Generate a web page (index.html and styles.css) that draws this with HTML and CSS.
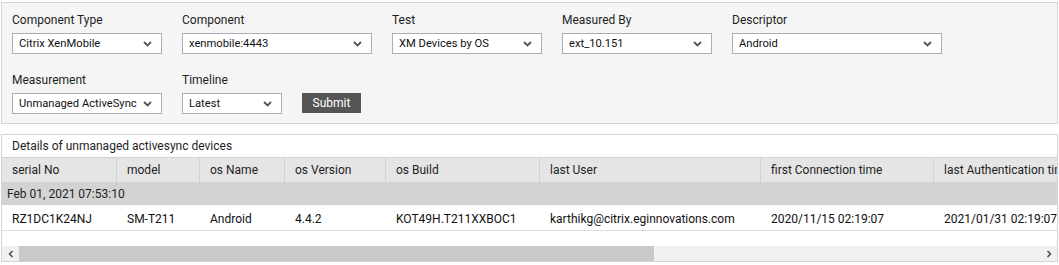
FILE: index.html
```html
<!DOCTYPE html>
<html lang="en">
<head>
    <meta charset="UTF-8" />
    <title>Details of unmanaged activesync devices</title>
    <link rel="stylesheet" href="styles.css">
</head>
<body>
    <div class="page">
        <form class="filters">
            <div class="filter-row">
                <div class="field">
                    <label>Component Type</label>
                    <div class="select w150">Citrix XenMobile<svg class="chev" width="9" height="6" viewBox="0 0 9 6"><path d="M1 1 L4.5 4.5 L8 1" /></svg></div>
                </div>
                <div class="field">
                    <label>Component</label>
                    <div class="select w190">xenmobile:4443<svg class="chev" width="9" height="6" viewBox="0 0 9 6"><path d="M1 1 L4.5 4.5 L8 1" /></svg></div>
                </div>
                <div class="field">
                    <label>Test</label>
                    <div class="select w150">XM Devices by OS<svg class="chev" width="9" height="6" viewBox="0 0 9 6"><path d="M1 1 L4.5 4.5 L8 1" /></svg></div>
                </div>
                <div class="field">
                    <label>Measured By</label>
                    <div class="select w150">ext_10.151<svg class="chev" width="9" height="6" viewBox="0 0 9 6"><path d="M1 1 L4.5 4.5 L8 1" /></svg></div>
                </div>
                <div class="field">
                    <label>Descriptor</label>
                    <div class="select w210">Android<svg class="chev" width="9" height="6" viewBox="0 0 9 6"><path d="M1 1 L4.5 4.5 L8 1" /></svg></div>
                </div>
            </div>
            <div class="filter-row">
                <div class="field">
                    <label>Measurement</label>
                    <div class="select w150">Unmanaged ActiveSync<svg class="chev" width="9" height="6" viewBox="0 0 9 6"><path d="M1 1 L4.5 4.5 L8 1" /></svg></div>
                </div>
                <div class="field">
                    <label>Timeline</label>
                    <div class="select w100">Latest<svg class="chev" width="9" height="6" viewBox="0 0 9 6"><path d="M1 1 L4.5 4.5 L8 1" /></svg></div>
                </div>
                <button type="button" class="submit">Submit</button>
            </div>
        </form>

        <section class="results">
            <div class="results-title">Details of unmanaged activesync devices</div>
            <div class="table-wrap">
                <table class="grid">
                    <colgroup>
                        <col style="width: 114px">
                        <col style="width: 83px">
                        <col style="width: 85px">
                        <col style="width: 101px">
                        <col style="width: 154px">
                        <col style="width: 221px">
                        <col style="width: 173px">
                        <col style="width: 200px">
                    </colgroup>
                    <thead>
                        <tr>
                            <th>serial No</th>
                            <th>model</th>
                            <th>os Name</th>
                            <th>os Version</th>
                            <th>os Build</th>
                            <th>last User</th>
                            <th>first Connection time</th>
                            <th>last Authentication time</th>
                        </tr>
                    </thead>
                    <tbody>
                        <tr class="group-row">
                            <td colspan="8">Feb 01, 2021 07:53:10</td>
                        </tr>
                        <tr class="data-row">
                            <td>RZ1DC1K24NJ</td>
                            <td>SM-T211</td>
                            <td>Android</td>
                            <td>4.4.2</td>
                            <td>KOT49H.T211XXBOC1</td>
                            <td>karthikg@citrix.eginnovations.com</td>
                            <td>2020/11/15 02:19:07</td>
                            <td>2021/01/31 02:19:07</td>
                        </tr>
                    </tbody>
                </table>
            </div>
            <div class="hscroll">
                <span class="scroll-btn"><svg width="6" height="8" viewBox="0 0 6 8"><path d="M4.5 1 L1.5 4 L4.5 7" /></svg></span>
                <div class="scroll-track">
                    <div class="scroll-thumb"></div>
                </div>
                <span class="scroll-btn"><svg width="6" height="8" viewBox="0 0 6 8"><path d="M1.5 1 L4.5 4 L1.5 7" /></svg></span>
            </div>
        </section>
    </div>
</body>
</html>
```

FILE: styles.css
```css
* {
    margin: 0;
    padding: 0;
    box-sizing: border-box;
}

body {
    font-family: Roboto, 'Liberation Sans', sans-serif;
    font-size: 12px;
    color: #222222;
    background: #ffffff;
}

.page {
    width: 1059px;
    padding: 2px 1px 0 1px;
}

/* filter panel */
.filters {
    width: 1057px;
    background: #f5f5f5;
    border: 1px solid #d4d4d4;
    padding: 8px 10px 9px;
}

.filter-row {
    display: flex;
    align-items: flex-end;
    gap: 20px;
}

.filter-row + .filter-row {
    margin-top: 17px;
}

.field label {
    display: block;
    height: 18px;
    line-height: 18px;
    margin-bottom: 4px;
    color: #1e1e1e;
}

.select {
    display: flex;
    align-items: center;
    justify-content: space-between;
    height: 21px;
    padding: 0 9px 0 6px;
    background: #ffffff;
    border: 1px solid #a9afb8;
    color: #111111;
    font-size: 11.2px;
    white-space: nowrap;
}

.w100 { width: 100px; }
.w150 { width: 150px; }
.w190 { width: 190px; }
.w210 { width: 210px; }

.chev {
    flex: none;
    margin-left: 6px;
}

.chev path {
    fill: none;
    stroke: #555555;
    stroke-width: 1.8;
}

.submit {
    width: 59px;
    height: 20px;
    margin-bottom: 1px;
    background: #555555;
    color: #ffffff;
    border: none;
    font-family: inherit;
    font-size: 12px;
}

/* results table */
.results {
    width: 1057px;
    margin-top: 10px;
    border: 1px solid #d4d4d4;
}

.results-title {
    height: 22px;
    line-height: 22px;
    padding-left: 10px;
    color: #1e1e1e;
}

.table-wrap {
    overflow: hidden;
    padding-bottom: 15px;
}

.grid {
    width: 1131px;
    table-layout: fixed;
    border-collapse: separate;
    border-spacing: 0;
}

.grid th,
.grid td {
    text-align: left;
    font-weight: 400;
    white-space: nowrap;
    overflow: hidden;
}

.grid th {
    height: 25px;
    padding: 0 0 0 10px;
    background: #e5e5e5;
    border-top: 1px solid #d2d2d2;
    color: #1e1e1e;
}

.grid th + th {
    border-left: 1px solid #d2d2d2;
}

.group-row td {
    height: 23px;
    padding-left: 5px;
    background: #d3d3d3;
    color: #1e1e1e;
}

.data-row td {
    height: 26px;
    padding: 2px 0 0 10px;
    border-bottom: 1px solid #dcdcdc;
    color: #111111;
}

.data-row td + td {
    padding-left: 11px;
}

/* horizontal scrollbar */
.hscroll {
    display: flex;
    height: 15px;
    background: #f1f1f1;
}

.scroll-btn {
    flex: none;
    width: 17px;
    display: flex;
    align-items: center;
    justify-content: center;
}

.scroll-btn path {
    fill: none;
    stroke: #505050;
    stroke-width: 1.6;
}

.scroll-track {
    flex: 1;
}

.scroll-thumb {
    width: 635px;
    height: 100%;
    background: #c9c9c9;
}
```
